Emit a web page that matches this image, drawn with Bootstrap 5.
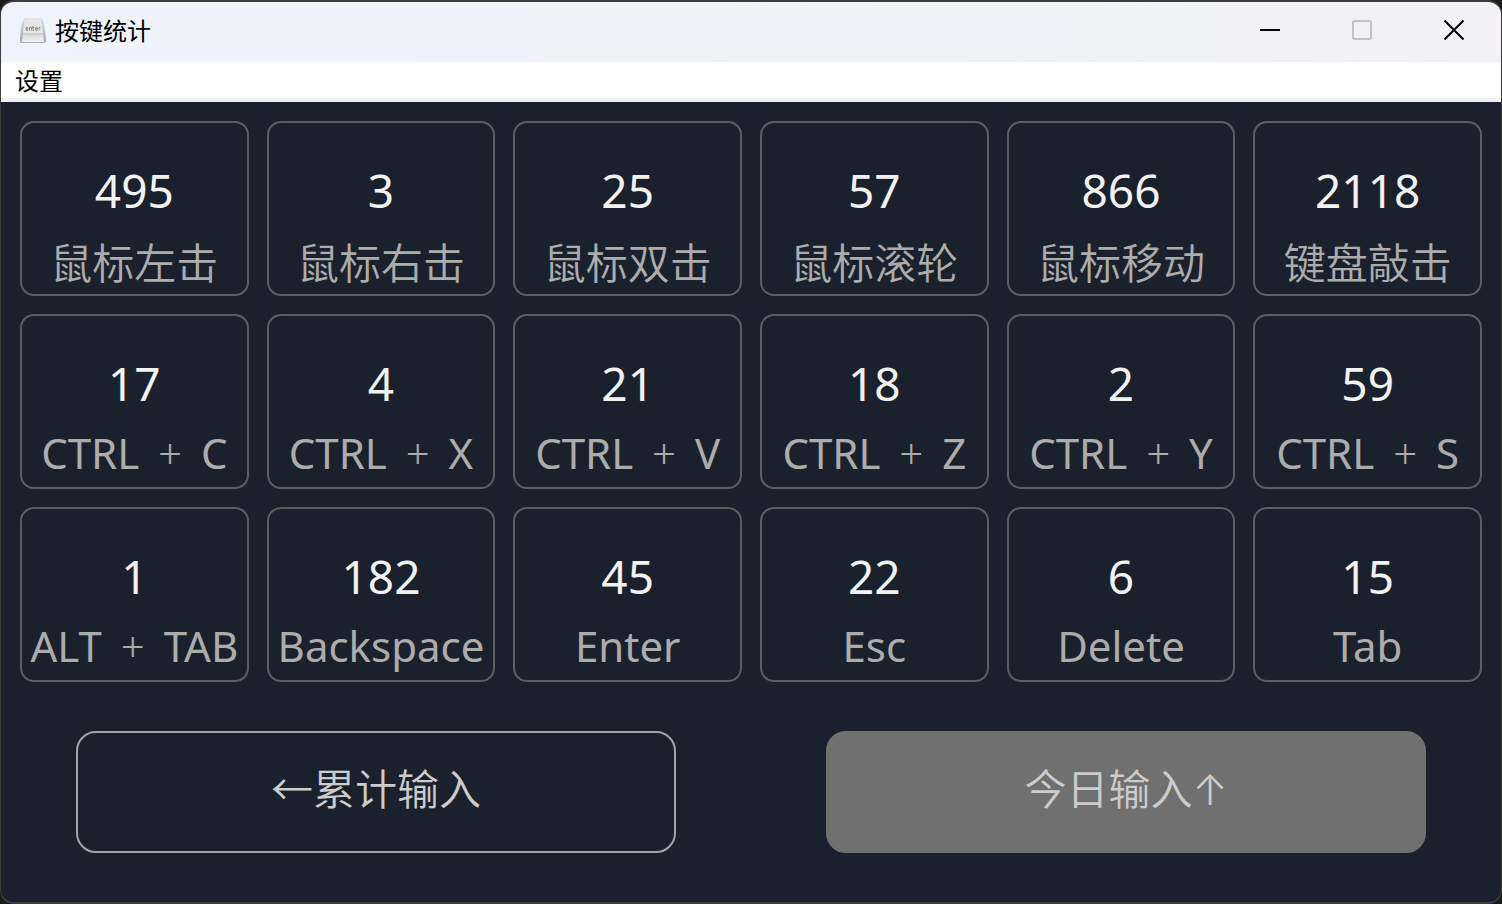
<!DOCTYPE html>
<html lang="zh-CN">
<head>
<meta charset="utf-8">
<meta name="viewport" content="width=device-width, initial-scale=1">
<title>按键统计</title>
<link href="https://cdn.jsdelivr.net/npm/bootstrap@5.3.0/dist/css/bootstrap.min.css" rel="stylesheet">
<style>
  body { background: #1a1a1a; font-family: "Noto Sans", "Noto Sans CJK SC", sans-serif; }
  .app-window { min-height: 100vh; background: #1b212c; border: 1px solid #3d3d3d; border-width: 2px 1px; border-radius: 14px; }
  .title-bar { height: 60px; padding: 0 1px 4px 18px; background: linear-gradient(90deg, #eff3fb, #f0f2f9 60%, #f3f0f7); color: #000; }
  .window-title { font: 400 24px/36px "Noto Sans CJK SC", sans-serif; }
  .caption-btn { width: 92px; height: 56px; color: #000; }
  .caption-btn:disabled { color: #c2c1c7; opacity: 1; }
  .menu-bar { background: #fff; border-bottom: 4px solid #f0f0f0; padding-left: 14px; }
  .menu-bar a { color: #000; font: 400 24px/36px "Noto Sans CJK SC", sans-serif; }
  .stat-area { padding: 19px 19px 0; }
  .stat-grid { display: grid; grid-template-columns: repeat(6, minmax(0, 1fr)); gap: 18px; }
  .stat-box { border: 2px solid #5c5e62; border-radius: 14px; padding: 31px 0 0; text-align: center; white-space: nowrap; }
  .stat-num { color: #f2f2f2; font-size: 46px; line-height: 72px; }
  .stat-name { color: #acacac; font-size: 42px; line-height: 68px; }
  .stat-name:lang(zh) { font-family: "Noto Sans CJK SC DemiLight", "Noto Sans CJK SC", sans-serif; font-weight: 350; line-height: 70px; margin-bottom: -2px; }
  .key-plus { margin: 0 8px; font-weight: 300; }
  .mode-row { margin-top: 49px; padding-bottom: 24px; }
  .mode-btn { width: 80%; border: 2px solid #a3a5a8; border-radius: 20px; padding: 19px 0 29px; color: #ccc; font: 350 42px/70px "Noto Sans CJK SC DemiLight", "Noto Sans CJK SC", sans-serif; }
  .mode-btn.active-mode { background: #707070; border-color: #707070; color: #ccc; }
  .up-arrow { font-family: Inter, sans-serif; font-weight: 300; line-height: 1; }
</style>
</head>
<body>
<div class="app-window d-flex flex-column overflow-hidden">
  <header class="title-bar d-flex align-items-center">
    <svg width="28" height="28" viewBox="0 0 28 28" aria-hidden="true">
      <defs>
        <linearGradient id="side" x2="0" y2="1"><stop stop-color="#d4d5d6"/><stop offset="1" stop-color="#a9adb4"/></linearGradient>
        <linearGradient id="front" x2="0" y2="1"><stop stop-color="#d8d9da"/><stop offset="1" stop-color="#f3f3f3"/></linearGradient>
      </defs>
      <path d="M5 3Q6 2 14 2T23 3Q25 5 27 22Q28 27 25 27H3Q0 27 1 22Q2 6 5 3Z" fill="url(#side)"/>
      <path d="M6 3Q14 1 22 3Q23 4 24 17Q14 18 4 17Q5 4 6 3Z" fill="#e6e6e5"/>
      <path d="M4 18Q14 19 24 18L25 26H3Z" fill="url(#front)"/>
      <path d="M7 13h2q0-2-1-2t-1 2 2 1.500M10.500 14.500v-3q2-1 2 0v3M14 10v4.500h1M13.500 11.500h2M16.500 13h2q0-2-1-2t-1 2 2 1.500M20 14.500v-3h1.500" fill="none" stroke="#777" stroke-width=".8"/>
    </svg>
    <span class="window-title ms-2">按键统计</span>
    <div class="d-flex ms-auto">
      <button class="caption-btn btn border-0 rounded-0 p-0 d-flex align-items-center justify-content-center" aria-label="最小化"><svg width="20" height="20" viewBox="0 0 20 20"><path d="M0 10H20" stroke="currentColor" stroke-width="2"/></svg></button>
      <button class="caption-btn btn border-0 rounded-0 p-0 d-flex align-items-center justify-content-center" aria-label="最大化" disabled><svg width="20" height="20" viewBox="0 0 20 20"><rect x="1" y="1" width="18" height="18" rx="2" fill="none" stroke="currentColor" stroke-width="2"/></svg></button>
      <button class="caption-btn btn border-0 rounded-0 p-0 d-flex align-items-center justify-content-center" aria-label="关闭"><svg width="20" height="20" viewBox="0 0 20 20"><path d="M.5 .5L19.5 19.5M19.5 .5L.5 19.5" stroke="currentColor" stroke-width="2"/></svg></button>
    </div>
  </header>
  <nav class="menu-bar d-flex"><a href="#" class="text-decoration-none">设置</a></nav>
  <main class="flex-grow-1">
    <div class="stat-area">
      <div class="stat-grid">
        <div class="stat-box"><div class="stat-num">495</div><div class="stat-name">鼠标左击</div></div>
        <div class="stat-box"><div class="stat-num">3</div><div class="stat-name">鼠标右击</div></div>
        <div class="stat-box"><div class="stat-num">25</div><div class="stat-name">鼠标双击</div></div>
        <div class="stat-box"><div class="stat-num">57</div><div class="stat-name">鼠标滚轮</div></div>
        <div class="stat-box"><div class="stat-num">866</div><div class="stat-name">鼠标移动</div></div>
        <div class="stat-box"><div class="stat-num">2118</div><div class="stat-name">键盘敲击</div></div>
        <div class="stat-box"><div class="stat-num">17</div><div class="stat-name" lang="en">CTRL <span class="key-plus">+</span> C</div></div>
        <div class="stat-box"><div class="stat-num">4</div><div class="stat-name" lang="en">CTRL <span class="key-plus">+</span> X</div></div>
        <div class="stat-box"><div class="stat-num">21</div><div class="stat-name" lang="en">CTRL <span class="key-plus">+</span> V</div></div>
        <div class="stat-box"><div class="stat-num">18</div><div class="stat-name" lang="en">CTRL <span class="key-plus">+</span> Z</div></div>
        <div class="stat-box"><div class="stat-num">2</div><div class="stat-name" lang="en">CTRL <span class="key-plus">+</span> Y</div></div>
        <div class="stat-box"><div class="stat-num">59</div><div class="stat-name" lang="en">CTRL <span class="key-plus">+</span> S</div></div>
        <div class="stat-box"><div class="stat-num">1</div><div class="stat-name" lang="en">ALT <span class="key-plus">+</span> TAB</div></div>
        <div class="stat-box"><div class="stat-num">182</div><div class="stat-name" lang="en">Backspace</div></div>
        <div class="stat-box"><div class="stat-num">45</div><div class="stat-name" lang="en">Enter</div></div>
        <div class="stat-box"><div class="stat-num">22</div><div class="stat-name" lang="en">Esc</div></div>
        <div class="stat-box"><div class="stat-num">6</div><div class="stat-name" lang="en">Delete</div></div>
        <div class="stat-box"><div class="stat-num">15</div><div class="stat-name" lang="en">Tab</div></div>
      </div>
    </div>
    <div class="mode-row row g-0 text-center">
      <div class="col-6"><button class="mode-btn btn">←累计输入</button></div>
      <div class="col-6"><button class="mode-btn active-mode btn">今日输入<span class="up-arrow">↑</span></button></div>
    </div>
  </main>
</div>
<script src="https://cdn.jsdelivr.net/npm/bootstrap@5.3.0/dist/js/bootstrap.bundle.min.js"></script>
</body>
</html>
